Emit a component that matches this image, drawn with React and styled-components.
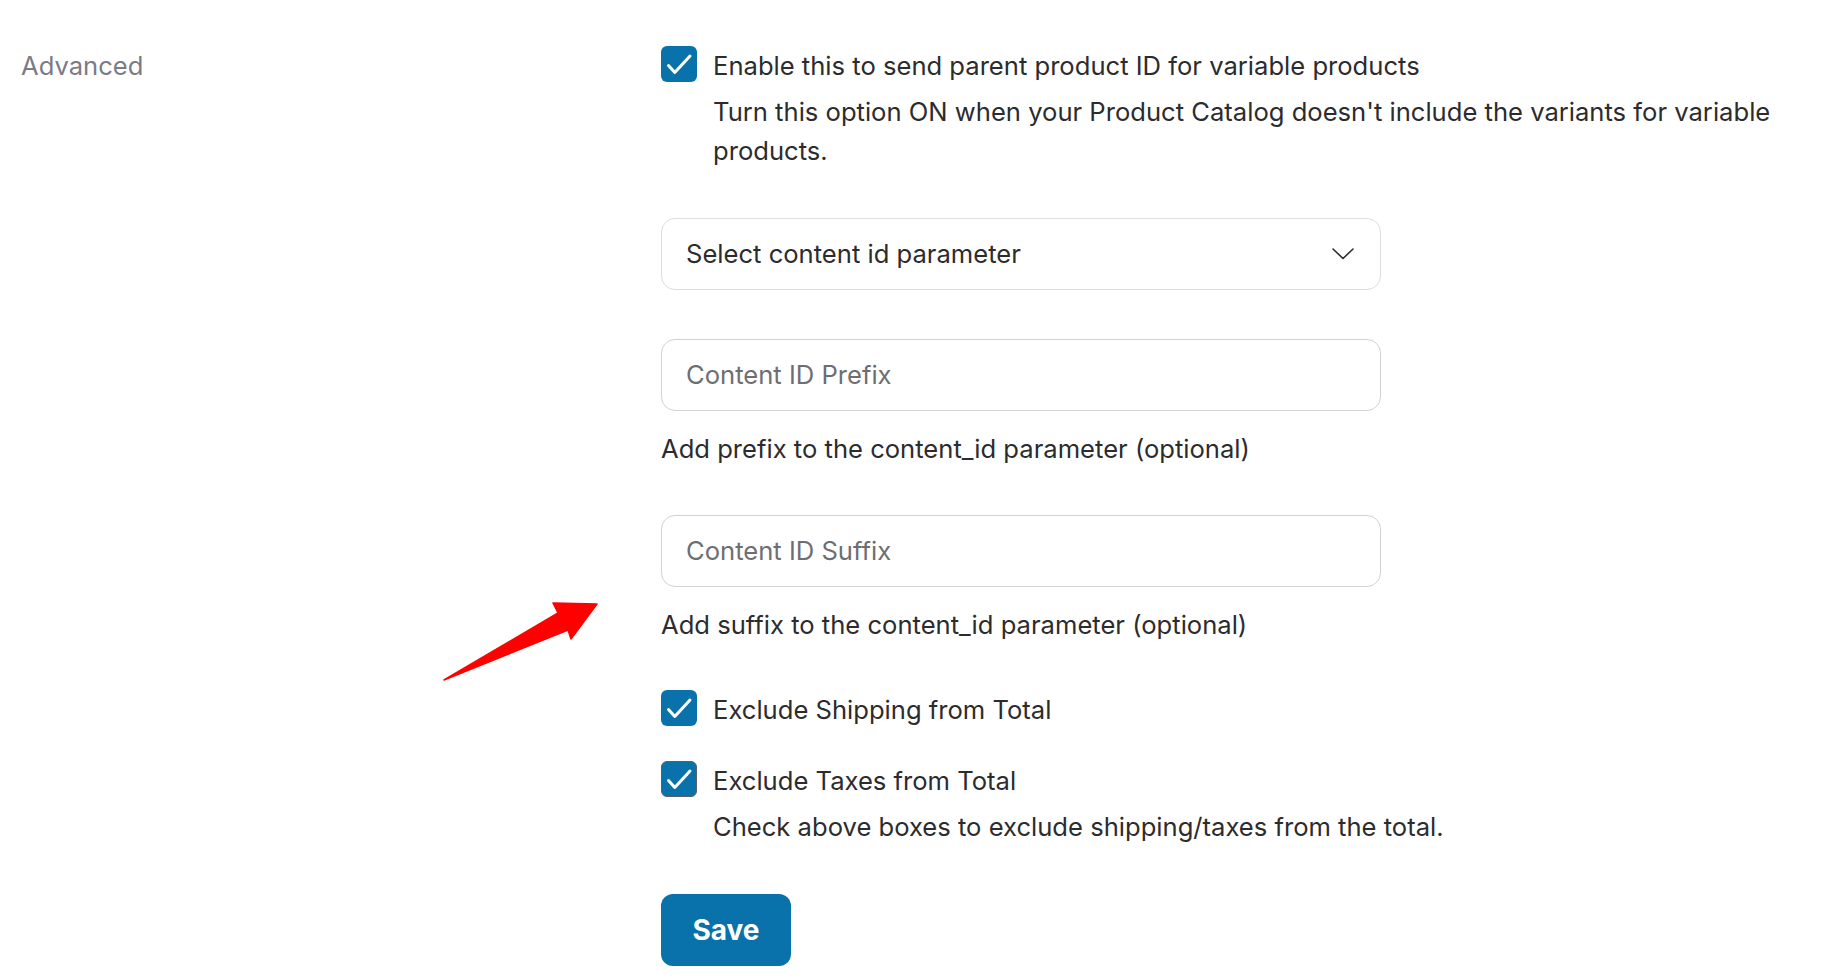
import React from "react";
import styled, { createGlobalStyle } from "styled-components";

const GlobalStyle = createGlobalStyle`
  html, body {
    margin: 0;
    padding: 0;
    background: #ffffff;
  }
  body {
    font-family: Inter, "Noto Sans", "Liberation Sans", sans-serif;
    color: #2c2c2e;
  }
`;

const Page = styled.div`
  position: relative;
  display: grid;
  grid-template-columns: 640px 1fr;
  padding: 46px 22px 0 21px;
  min-height: 978px;
  box-sizing: border-box;
`;

const SectionLabel = styled.div`
  font-size: 25.6px;
  line-height: 40px;
  color: #7b7b86;
`;

const Fields = styled.div`
  display: flex;
  flex-direction: column;
  align-items: flex-start;
`;

const CheckRow = styled.label`
  display: flex;
  align-items: flex-start;
  gap: 16px;
  margin-top: ${(p) => p.$gap || 0}px;
`;

const Box = styled.span`
  flex: none;
  width: 36px;
  height: 36px;
  border-radius: 6px;
  background: #0a72aa;
  box-sizing: border-box;
  border: ${(p) => (p.$focused ? "1.5px solid #5a6066" : "none")};
  display: flex;
  align-items: center;
  justify-content: center;
`;

const CheckText = styled.div`
  display: flex;
  flex-direction: column;
`;

const Title = styled.span`
  font-size: 25.6px;
  line-height: 40px;
  color: #2c2c2e;
`;

const Hint = styled.p`
  margin: ${(p) => p.$top || 0}px 0 0;
  font-size: 25.6px;
  line-height: 39px;
  color: #2c2c2e;
`;

const Select = styled.div`
  margin-top: ${(p) => p.$gap}px;
  width: 720px;
  height: 72px;
  box-sizing: border-box;
  border: 1.5px solid #dcdce6;
  border-radius: 14px;
  padding: 0 26px 0 24px;
  display: flex;
  align-items: center;
  justify-content: space-between;
  font-size: 25.6px;
  color: #2c2c2e;
`;

const Input = styled.input`
  margin-top: ${(p) => p.$gap}px;
  width: 720px;
  height: 72px;
  box-sizing: border-box;
  border: 1.5px solid #d2d2d4;
  border-radius: 14px;
  padding: 0 24px;
  font-family: inherit;
  font-size: 25.6px;
  color: #2c2c2e;
  outline: none;
  background: #fff;

  &::placeholder {
    color: #6e6e72;
  }
`;

const SaveButton = styled.button`
  margin-top: ${(p) => p.$gap}px;
  width: 130px;
  height: 72px;
  border: none;
  border-radius: 12px;
  background: #0a72aa;
  color: #ffffff;
  font-family: inherit;
  font-size: 28px;
  font-weight: 700;
  cursor: pointer;
`;

const Pointer = styled.svg`
  position: absolute;
  left: 440px;
  top: 598px;
`;

function Check({ focused }) {
  return (
    <Box $focused={focused}>
      <svg width="36" height="36" viewBox="0 0 36 36" style={{ flex: "none" }}>
        <polyline
          points="7.5,19.5 13.8,26.5 29,10"
          fill="none"
          stroke="#ffffff"
          strokeWidth="3"
          strokeLinecap="round"
          strokeLinejoin="round"
        />
      </svg>
    </Box>
  );
}

function Chevron() {
  return (
    <svg width="22" height="12" viewBox="0 0 22 12">
      <polyline
        points="1,1 11,10.5 21,1"
        fill="none"
        stroke="#2c2c2e"
        strokeWidth="1.6"
        strokeLinecap="round"
        strokeLinejoin="round"
      />
    </svg>
  );
}

export default function App() {
  return (
    <>
      <GlobalStyle />
      <Page>
        <SectionLabel>Advanced</SectionLabel>
        <Fields>
          <CheckRow>
            <Check />
            <CheckText>
              <Title>Enable this to send parent product ID for variable products</Title>
              <Hint $top={5.5}>
                Turn this option ON when your Product Catalog doesn't include the variants for variable products.
              </Hint>
            </CheckText>
          </CheckRow>

          <Select $gap={48}>
            <span>Select content id parameter</span>
            <Chevron />
          </Select>

          <Input $gap={49} placeholder="Content ID Prefix" />
          <Hint $top={18}>Add prefix to the content_id parameter (optional)</Hint>

          <Input $gap={47} placeholder="Content ID Suffix" />
          <Hint $top={18}>Add suffix to the content_id parameter (optional)</Hint>

          <CheckRow $gap={46}>
            <Check />
            <Title>Exclude Shipping from Total</Title>
          </CheckRow>

          <CheckRow $gap={31}>
            <Check focused />
            <CheckText>
              <Title>Exclude Taxes from Total</Title>
              <Hint $top={6.5}>Check above boxes to exclude shipping/taxes from the total.</Hint>
            </CheckText>
          </CheckRow>

          <SaveButton $gap={48}>Save</SaveButton>
        </Fields>

        <Pointer width="164" height="88" viewBox="440 598 164 88">
          <polygon
            points="444,680 558,613 553,603 597,604 571,639 568,630"
            fill="#ff0000"
            stroke="#ff0000"
            strokeWidth="1.5"
            strokeLinejoin="round"
          />
        </Pointer>
      </Page>
    </>
  );
}
